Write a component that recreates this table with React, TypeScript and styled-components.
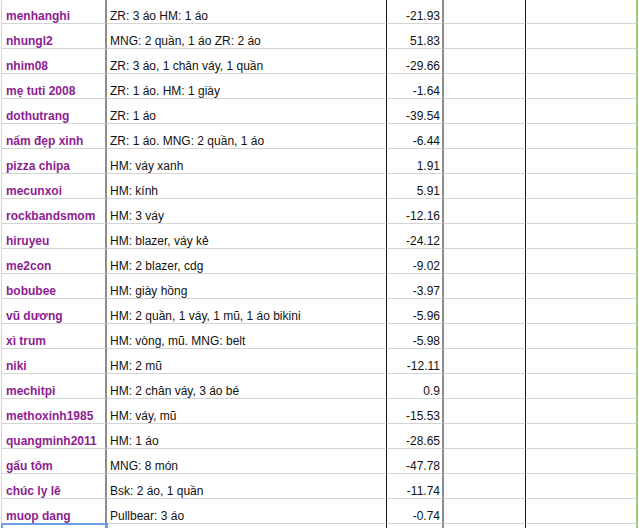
import React from 'react';
import styled, { createGlobalStyle } from 'styled-components';

interface Entry {
  name: string;
  items: string;
  amount: string;
}

const entries: Entry[] = [
  { name: 'menhanghi', items: 'ZR: 3 áo HM: 1 áo', amount: '-21.93' },
  { name: 'nhungl2', items: 'MNG: 2 quần, 1 áo ZR: 2 áo', amount: '51.83' },
  { name: 'nhim08', items: 'ZR: 3 áo, 1 chân váy, 1 quần', amount: '-29.66' },
  { name: 'mẹ tuti 2008', items: 'ZR: 1 áo. HM: 1 giày', amount: '-1.64' },
  { name: 'dothutrang', items: 'ZR: 1 áo', amount: '-39.54' },
  { name: 'nấm đẹp xinh', items: 'ZR: 1 áo. MNG: 2 quần, 1 áo', amount: '-6.44' },
  { name: 'pizza chipa', items: 'HM: váy xanh', amount: '1.91' },
  { name: 'mecunxoi', items: 'HM: kính', amount: '5.91' },
  { name: 'rockbandsmom', items: 'HM: 3 váy', amount: '-12.16' },
  { name: 'hiruyeu', items: 'HM: blazer, váy kẻ', amount: '-24.12' },
  { name: 'me2con', items: 'HM: 2 blazer, cdg', amount: '-9.02' },
  { name: 'bobubee', items: 'HM: giày hồng', amount: '-3.97' },
  { name: 'vũ dương', items: 'HM: 2 quần, 1 váy, 1 mũ, 1 áo bikini', amount: '-5.96' },
  { name: 'xì trum', items: 'HM: vòng, mũ. MNG: belt', amount: '-5.98' },
  { name: 'niki', items: 'HM: 2 mũ', amount: '-12.11' },
  { name: 'mechitpi', items: 'HM: 2 chân váy, 3 áo bé', amount: '0.9' },
  { name: 'methoxinh1985', items: 'HM: váy, mũ', amount: '-15.53' },
  { name: 'quangminh2011', items: 'HM: 1 áo', amount: '-28.65' },
  { name: 'gấu tôm', items: 'MNG: 8 món', amount: '-47.78' },
  { name: 'chúc ly lê', items: 'Bsk: 2 áo, 1 quần', amount: '-11.74' },
  { name: 'muop dang', items: 'Pullbear: 3 áo', amount: '-0.74' },
];

const GlobalStyle = createGlobalStyle`
  html, body {
    margin: 0;
    padding: 0;
    background: #fff;
    overflow: hidden;
  }
  body {
    font-family: 'Liberation Sans', Arial, Helvetica, sans-serif;
  }
`;

const Sheet = styled.div`
  width: 638px;
  margin-top: -1px;
  margin-left: 1px;
  border-left: 1px solid #d6d6d6;
`;

const Row = styled.div`
  display: grid;
  grid-template-columns: 105px 280px 57px 82px 112px;
  height: 25px;
`;

const Cell = styled.div<{ $align?: 'left' | 'right' }>`
  display: flex;
  align-items: flex-end;
  justify-content: ${(p) => (p.$align === 'right' ? 'flex-end' : 'flex-start')};
  box-sizing: border-box;
  border-bottom: 1px solid #d4d4d4;
  font-size: 12px;
  line-height: 13px;
  color: #111;
  white-space: nowrap;
  overflow: hidden;
`;

const NameCell = styled(Cell)<{ $selected?: boolean }>`
  padding-left: 4px;
  font-weight: bold;
  color: #8d1d91;
  border-right: 2px solid #8c8c8c;
  outline: ${(p) => (p.$selected ? '2px solid #6d9ee6' : 'none')};
  outline-offset: -1px;
`;

const ItemsCell = styled(Cell)`
  padding-left: 3px;
  border-right: 1px solid #1a1a1a;
`;

const AmountCell = styled(Cell)`
  padding-right: 2px;
  border-right: 2px solid #8c8c8c;
`;

const BlankCell = styled(Cell)`
  border-right: 1px solid #1a1a1a;
`;

const EdgeCell = styled(Cell)`
  border-right: 2px solid #8ed36a;
`;

export default function App() {
  return (
    <>
      <GlobalStyle />
      <Sheet>
        {entries.map((e) => (
          <Row key={e.name}>
            <NameCell>{e.name}</NameCell>
            <ItemsCell>{e.items}</ItemsCell>
            <AmountCell $align="right">{e.amount}</AmountCell>
            <BlankCell />
            <EdgeCell />
          </Row>
        ))}
        <Row>
          <NameCell $selected />
          <ItemsCell />
          <AmountCell $align="right" />
          <BlankCell />
          <EdgeCell />
        </Row>
      </Sheet>
    </>
  );
}
